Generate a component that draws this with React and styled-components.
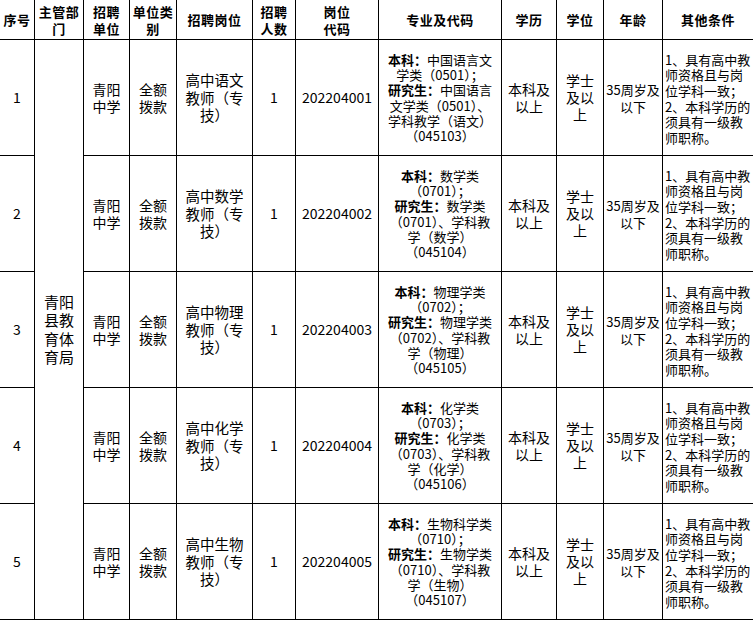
import React from "react";
import styled, { createGlobalStyle } from "styled-components";

const Global = createGlobalStyle`
  html, body {
    margin: 0;
    padding: 0;
    background: #fff;
    overflow: hidden;
  }
  body {
    font-family: "Noto Sans CJK SC", "Noto Sans", sans-serif;
    color: #000;
  }
`;

// cell widths (grid lines are the 1px gaps)
const COLS = "34px 48px 45px 46px 75px 42px 82px 122px 54px 46px 58px 90px";

const Sheet = styled.div`
  display: grid;
  grid-template-columns: ${COLS};
  grid-template-rows: 39px repeat(5, 115px);
  gap: 1px;
  padding: 1px;
  background: #000;
  margin: -1px 0 0 -1px;
  width: max-content;
`;

const Head = styled.div`
  background: #fff;
  display: flex;
  align-items: center;
  justify-content: center;
  text-align: center;
  font-weight: 700;
  font-size: 13px;
  line-height: 17px;
  letter-spacing: 0.5px;
`;

const Cell = styled.div`
  background: #fff;
  display: flex;
  flex-direction: column;
  align-items: ${({ $left }) => ($left ? "flex-start" : "center")};
  justify-content: center;
  text-align: ${({ $left }) => ($left ? "left" : "center")};
  padding: ${({ $left }) => ($left ? "2px 0 0 2px" : "0")};
  font-size: ${({ $size }) => $size || 14}px;
  line-height: ${({ $lh }) => $lh || 17}px;
  white-space: nowrap;
`;

const Dept = styled(Cell)`
  grid-column: 2;
  grid-row: 2 / span 5;
  font-size: 15px;
  line-height: 18.5px;
`;

const Line = styled.span`
  display: block;
`;

const Strong = styled.b`
  font-weight: 700;
`;

const heads = [
  ["序号"],
  ["主管部", "门"],
  ["招聘", "单位"],
  ["单位类", "别"],
  ["招聘岗位"],
  ["招聘", "人数"],
  ["岗位", "代码"],
  ["专业及代码"],
  ["学历"],
  ["学位"],
  ["年龄"],
  ["其他条件"],
];

const major = (ben, yan, sub, code, num) => [
  ["本科：", ben],
  ["", `（${num}）；`],
  ["研究生：", yan],
  ["", `（${num}）、学科教`],
  ["", `学（${sub}）`],
  ["", `（${code}）`],
];

const rows = [
  {
    subj: "语文",
    code: "202204001",
    major: [
      ["本科：", "中国语言文"],
      ["", "学类（0501）；"],
      ["研究生：", "中国语言"],
      ["", "文学类（0501）、"],
      ["", "学科教学（语文）"],
      ["", "（045103）"],
    ],
  },
  { subj: "数学", code: "202204002", major: major("数学类", "数学类", "数学", "045104", "0701") },
  { subj: "物理", code: "202204003", major: major("物理学类", "物理学类", "物理", "045105", "0702") },
  { subj: "化学", code: "202204004", major: major("化学类", "化学类", "化学", "045106", "0703") },
  { subj: "生物", code: "202204005", major: major("生物科学类", "生物学类", "生物", "045107", "0710") },
];

const other = [
  "1、具有高中教",
  "师资格且与岗",
  "位学科一致；",
  "2、本科学历的",
  "须具有一级教",
  "师职称。",
];

const Lines = ({ items }) => items.map((t, i) => <Line key={i}>{t}</Line>);

export default function App() {
  return (
    <>
      <Global />
      <Sheet>
        {heads.map((h, i) => (
          <Head key={i}>
            <div>
              <Lines items={h} />
            </div>
          </Head>
        ))}
        {rows.map((r, i) => (
          <React.Fragment key={r.code}>
            <Cell>{i + 1}</Cell>
            {i === 0 && (
              <Dept>
                <Lines items={["青阳", "县教", "育体", "育局"]} />
              </Dept>
            )}
            <Cell style={{ gridColumn: 3 }}>
              <Lines items={["青阳", "中学"]} />
            </Cell>
            <Cell>
              <Lines items={["全额", "拨款"]} />
            </Cell>
            <Cell $size={14.5} $lh={17.5}>
              <Lines items={[`高中${r.subj}`, "教师（专", "技）"]} />
            </Cell>
            <Cell>1</Cell>
            <Cell>{r.code}</Cell>
            <Cell $size={13} $lh={15.2}>
              {r.major.map(([b, t], k) => (
                <Line key={k}>
                  {b && <Strong>{b}</Strong>}
                  {t}
                </Line>
              ))}
            </Cell>
            <Cell>
              <Lines items={["本科及", "以上"]} />
            </Cell>
            <Cell>
              <Lines items={["学士", "及以", "上"]} />
            </Cell>
            <Cell $size={13}>
              <Lines items={["35周岁及", "以下"]} />
            </Cell>
            <Cell $left $size={13} $lh={15.6}>
              <Lines items={other} />
            </Cell>
          </React.Fragment>
        ))}
      </Sheet>
    </>
  );
}
